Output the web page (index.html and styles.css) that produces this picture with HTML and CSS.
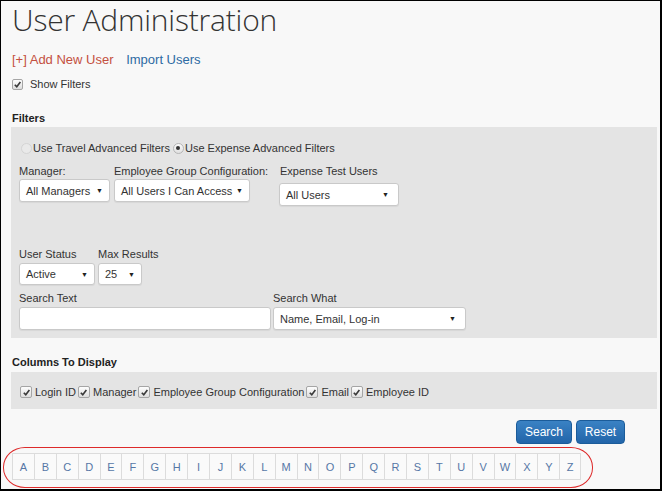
FILE: index.html
```html
<!DOCTYPE html>
<html>
<head>
<meta charset="utf-8">
<link rel="stylesheet" href="styles.css">
</head>
<body>
<div class="frame">
  <h1 class="title">User Administration</h1>
  <div class="actions">
    <a class="add-link">[+] Add New User</a>
    <a class="import-link">Import Users</a>
  </div>
  <div class="show-filters"><span class="cb"><svg viewBox="0 0 10 10"><path d="M2 5.2 L4.2 7.6 L8.2 2.2" /></svg></span>Show Filters</div>

  <h2 class="section-title">Filters</h2>
  <div class="panel filters">
    <div class="radio-row">
      <span class="radio disabled"></span><span class="radio-label">Use Travel Advanced Filters</span>
      <span class="radio checked"></span><span class="radio-label">Use Expense Advanced Filters</span>
    </div>
    <div class="field-row row1">
      <div class="field w-manager">
        <div class="label">Manager:</div>
        <div class="select"><span>All Managers</span><i>▼</i></div>
      </div>
      <div class="field w-egc">
        <div class="label">Employee Group Configuration:</div>
        <div class="select"><span>All Users I Can Access</span><i>▼</i></div>
      </div>
      <div class="field expense w-expense">
        <div class="label">Expense Test Users</div>
        <div class="select"><span>All Users</span><i>▼</i></div>
      </div>
    </div>
    <div class="field-row row2">
      <div class="field w-status">
        <div class="label">User Status</div>
        <div class="select"><span>Active</span><i>▼</i></div>
      </div>
      <div class="field gap3 w-max">
        <div class="label">Max Results</div>
        <div class="select"><span>25</span><i>▼</i></div>
      </div>
    </div>
    <div class="field-row row3">
      <div class="field w-text">
        <div class="label">Search Text</div>
        <div class="input"></div>
      </div>
      <div class="field gap2 w-what">
        <div class="label">Search What</div>
        <div class="select"><span>Name, Email, Log-in</span><i>▼</i></div>
      </div>
    </div>
  </div>

  <h2 class="section-title columns-title">Columns To Display</h2>
  <div class="panel columns">
    <span class="cb first"><svg viewBox="0 0 10 10"><path d="M2 5.2 L4.2 7.6 L8.2 2.2" /></svg></span><span class="col-label">Login ID</span><span class="cb"><svg viewBox="0 0 10 10"><path d="M2 5.2 L4.2 7.6 L8.2 2.2" /></svg></span><span class="col-label">Manager</span><span class="cb"><svg viewBox="0 0 10 10"><path d="M2 5.2 L4.2 7.6 L8.2 2.2" /></svg></span><span class="col-label">Employee Group Configuration</span><span class="cb"><svg viewBox="0 0 10 10"><path d="M2 5.2 L4.2 7.6 L8.2 2.2" /></svg></span><span class="col-label">Email</span><span class="cb"><svg viewBox="0 0 10 10"><path d="M2 5.2 L4.2 7.6 L8.2 2.2" /></svg></span><span class="col-label">Employee ID</span>
  </div>

  <div class="buttons">
    <button class="btn search-btn">Search</button>
    <button class="btn reset-btn">Reset</button>
  </div>

  <div class="pager">
    <a>A</a><a>B</a><a>C</a><a>D</a><a>E</a><a>F</a><a>G</a><a>H</a><a>I</a><a>J</a><a>K</a><a>L</a><a>M</a><a>N</a><a>O</a><a>P</a><a>Q</a><a>R</a><a>S</a><a>T</a><a>U</a><a>V</a><a>W</a><a>X</a><a>Y</a><a>Z</a>
  </div>

  <div class="annotation"></div>
</div>
</body>
</html>
```

FILE: styles.css
```css
* { box-sizing: border-box; }
html, body { margin: 0; padding: 0; background: #f8f8f8; }
body { font-family: "Liberation Sans", Arial, sans-serif; color: #333; }

.frame {
  position: relative;
  width: 662px;
  height: 491px;
  border: 1px solid #000;
  border-right-width: 2px;
  border-bottom-width: 2px;
  background: #f8f8f8;
  padding-left: 10px;
  overflow: hidden;
}

.title {
  margin: 0;
  padding-left: 1px;
  height: 38px;
  line-height: 38px;
  font-family: "Open Sans", sans-serif;
  font-weight: 300;
  font-size: 30px;
  color: #333;
  letter-spacing: -0.2px;
}

.actions {
  margin-top: 11px;
  height: 20px;
  line-height: 20px;
  font-size: 13px;
  padding-left: 1px;
}
.add-link { color: #c4503f; }
.import-link { color: #2d6aa3; margin-left: 9px; }

.show-filters {
  margin-top: 6px;
  height: 16px;
  line-height: 16px;
  font-size: 11px;
  display: flex;
  align-items: center;
  padding-left: 1px;
}
.show-filters .cb { margin-right: 7px; }

.cb {
  display: inline-flex;
  width: 11px;
  height: 11px;
  border: 1px solid #a5a5a5;
  border-radius: 2px;
  background: linear-gradient(#fdfdfd, #dedede);
  align-items: center;
  justify-content: center;
  flex: none;
}
.cb svg { width: 9px; height: 9px; }
.cb path { fill: none; stroke: #3a3a3a; stroke-width: 1.8; }

.section-title {
  margin: 18px 0 1px 1px;
  height: 16px;
  line-height: 16px;
  font-size: 11px;
  font-weight: bold;
  color: #222;
}
.columns-title { margin-top: 16px; margin-bottom: 2px; }

.panel {
  background: #e4e4e4;
  width: 646px;
  padding-left: 8px;
}

.filters {
  height: 211px;
  padding-top: 13px;
}

.radio-row {
  height: 16px;
  display: flex;
  align-items: center;
  font-size: 11px;
}
.radio {
  width: 11px;
  height: 11px;
  border-radius: 50%;
  border: 1px solid #b5b5b5;
  background: linear-gradient(#fafafa, #e0e0e0);
  margin-left: 2px;
  margin-right: 1px;
  display: inline-flex;
  align-items: center;
  justify-content: center;
}
.radio.disabled { border-color: #d4d4d4; background: #e9e9e9; }
.radio.checked { margin-left: 3px; }
.radio.checked::after {
  content: "";
  width: 4px;
  height: 4px;
  border-radius: 50%;
  background: #333;
}
.radio-label { color: #333; }

.field-row { display: flex; align-items: flex-start; }
.row1 { margin-top: 7px; }
.row2 { margin-top: 40px; }
.row3 { margin-top: 5px; }
.field { display: flex; flex-direction: column; margin-right: 4px; flex: none; }
.field.gap3 { margin-left: -1px; }
.field.gap2 { margin-left: -2px; }
.field.expense { margin-left: 26px; }
.field.expense .select { margin-top: 4px; margin-left: -1px; }

.label {
  height: 16px;
  line-height: 16px;
  font-size: 11px;
  color: #333;
  white-space: nowrap;
}
.row2 .label, .row3 .label { height: 17px; line-height: 16px; }

.select, .input {
  height: 23px;
  width: 100%;
  background: #fff;
  border: 1px solid #c9c9c9;
  border-radius: 3px;
  box-shadow: 0 1px 1px rgba(0,0,0,0.06);
  display: flex;
  align-items: center;
  justify-content: space-between;
  padding: 0 6px 0 6px;
  font-size: 11px;
  color: #333;
  white-space: nowrap;
}
.select i {
  font-style: normal;
  font-size: 7px;
  color: #222;
}
.row2 .select { height: 22px; }
.w-manager { width: 91px; }
.w-egc { width: 136px; }
.w-expense { width: 120px; }
.w-status { width: 76px; }
.w-max { width: 44px; }
.w-text { width: 252px; }
.w-what { width: 193px; }
.w-what .select { padding-right: 9px; }
.w-expense .select { padding-right: 9px; }

.columns {
  height: 37px;
  display: flex;
  align-items: center;
  font-size: 11px;
  padding-top: 3px;
}
.columns .cb { width: 12px; height: 12px; margin-left: 2px; margin-right: 3px; }
.columns .cb.first { margin-left: 1px; }

.buttons {
  margin-top: 11px;
  display: flex;
  justify-content: flex-end;
  gap: 4px;
  margin-right: 35px;
}
.btn {
  height: 24px;
  border: 1px solid #1b5c9a;
  border-radius: 4px;
  background: linear-gradient(#3a82c4, #2265a9);
  color: #fff;
  font-family: "Liberation Sans", Arial, sans-serif;
  font-size: 12px;
  padding: 0;
}
.search-btn { width: 56px; }
.reset-btn { width: 49px; }

.pager {
  margin-top: 9px;
  margin-left: 1px;
  display: flex;
  height: 27px;
}
.pager a {
  width: 21.9px;
  height: 27px;
  border: 1px solid #dcdcdc;
  border-right: none;
  background: #fafafa;
  color: #5677a6;
  font-size: 11px;
  display: flex;
  align-items: center;
  justify-content: center;
}
.pager a:last-child { border-right: 1px solid #dcdcdc; }

.annotation {
  position: absolute;
  left: 2px;
  top: 446px;
  width: 590px;
  height: 41px;
  border: 1.5px solid #dd2a2a;
  border-radius: 22px / 20px;
  pointer-events: none;
}
```
